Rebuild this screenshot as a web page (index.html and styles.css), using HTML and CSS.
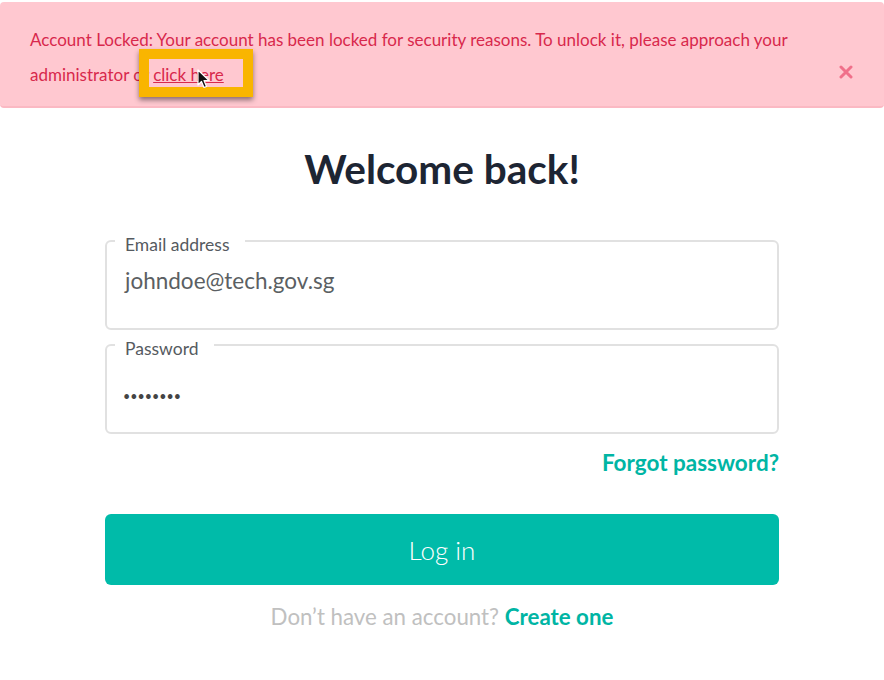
FILE: index.html
```html
<!DOCTYPE html>
<html lang="en">
<head>
<meta charset="utf-8">
<title>Welcome back</title>
<link rel="stylesheet" href="styles.css">
</head>
<body>
<div class="alert">
  <p class="alert-text">Account Locked: Your account has been locked for security reasons. To unlock it, please approach your administrator or <span class="hl-wrap"><a href="#" class="alert-link">click here</a><span class="hl-box"></span><svg class="cursor" width="14" height="20" viewBox="0 0 14 20"><path d="M1 1 L1 16 L4.5 12.5 L7 18.5 L9.5 17.5 L7 11.5 L12 11.5 Z" fill="#111" stroke="#fff" stroke-width="1.2" stroke-linejoin="round"/></svg></span></p>
  <button class="alert-close" aria-label="Close">
    <svg width="14" height="14" viewBox="0 0 14 14"><path d="M2 2 L12 12 M12 2 L2 12" stroke="#f0708a" stroke-width="3" stroke-linecap="round"/></svg>
  </button>
</div>
<main class="login">
  <h1 class="title">Welcome back!</h1>
  <fieldset class="field">
    <legend class="field-label">Email address</legend>
    <div class="field-value">johndoe@tech.gov.sg</div>
  </fieldset>
  <fieldset class="field">
    <legend class="field-label">Password</legend>
    <div class="field-value dots">••••••••</div>
  </fieldset>
  <div class="forgot-row"><a href="#" class="forgot">Forgot password?</a></div>
  <button class="login-btn">Log in</button>
  <p class="signup">Don’t have an account? <a href="#" class="signup-link">Create one</a></p>
</main>
</body>
</html>
```
FILE: styles.css
```css
* { box-sizing: border-box; }
html, body { margin: 0; padding: 0; background: #fff; }
body { font-family: "Lato", "Open Sans", sans-serif; width: 884px; height: 680px; overflow: hidden; }

.alert {
  margin-top: 2px;
  height: 106px;
  background: #ffc8d0;
  border-bottom: 2px solid #fbb9c3;
  border-radius: 4px;
  display: flex;
  align-items: flex-start;
  padding: 20px 30px 0 30px;
  position: relative;
}
.alert-text {
  margin: 0;
  width: 790px;
  color: #d8284c;
  font-size: 17px;
  line-height: 35px;
}
.alert-link { color: #d8284c; text-decoration: underline; }
.hl-wrap { position: relative; }
.hl-box {
  position: absolute;
  left: -14px; top: -15px;
  width: 114px; height: 48px;
  border: 10px solid #f9b500;
  box-shadow: 0 3px 5px rgba(0,0,0,0.45);
}
.cursor { position: absolute; left: 44px; top: 5px; }
.alert-close {
  position: absolute;
  right: 31px; top: 63px;
  background: none; border: 0; padding: 0; width: 14px; height: 14px;
}

.login {
  width: 674px;
  margin: 0 auto;
  padding-top: 36px;
  display: flex;
  flex-direction: column;
}
.title {
  margin: 0 0 34px 0;
  text-align: center;
  font-size: 40.5px;
  line-height: 50px;
  font-weight: 700;
  color: #1d2533;
}
.field {
  margin: 0;
  padding: 0 18px 0 18px;
  height: 102px;
  border: 2px solid #e1e1e1;
  border-radius: 6px;
}
.field + .field { margin-top: 2px; }
.field-label {
  margin-left: -10px;
  padding: 8px 16px 0 10px;
  font-size: 17.5px;
  line-height: 18px;
  color: #555a60;
}
.field-value {
  padding-top: 13px;
  font-size: 22.5px;
  line-height: 27px;
  color: #5b5f63;
}
.dots { padding-top: 31px; margin-left: -2px; font-size: 12.5px; line-height: 16px; color: #444; }
.forgot-row { display: flex; justify-content: flex-end; margin-top: 15px; }
.forgot {
  color: #00b5a4;
  font-size: 22.5px;
  line-height: 27px;
  font-weight: 700;
  text-decoration: none;
}
.login-btn {
  margin-top: 38px;
  height: 71px;
  border: 0;
  border-radius: 6px;
  background: #00bba9;
  color: #fff;
  font-family: inherit;
  font-size: 26px;
  font-weight: 300;
}
.signup {
  margin: 18px 0 0 0;
  text-align: center;
  font-size: 22.3px;
  line-height: 27px;
  color: #c0c0c0;
}
.signup-link { color: #00b5a4; font-weight: 700; text-decoration: none; }
```
